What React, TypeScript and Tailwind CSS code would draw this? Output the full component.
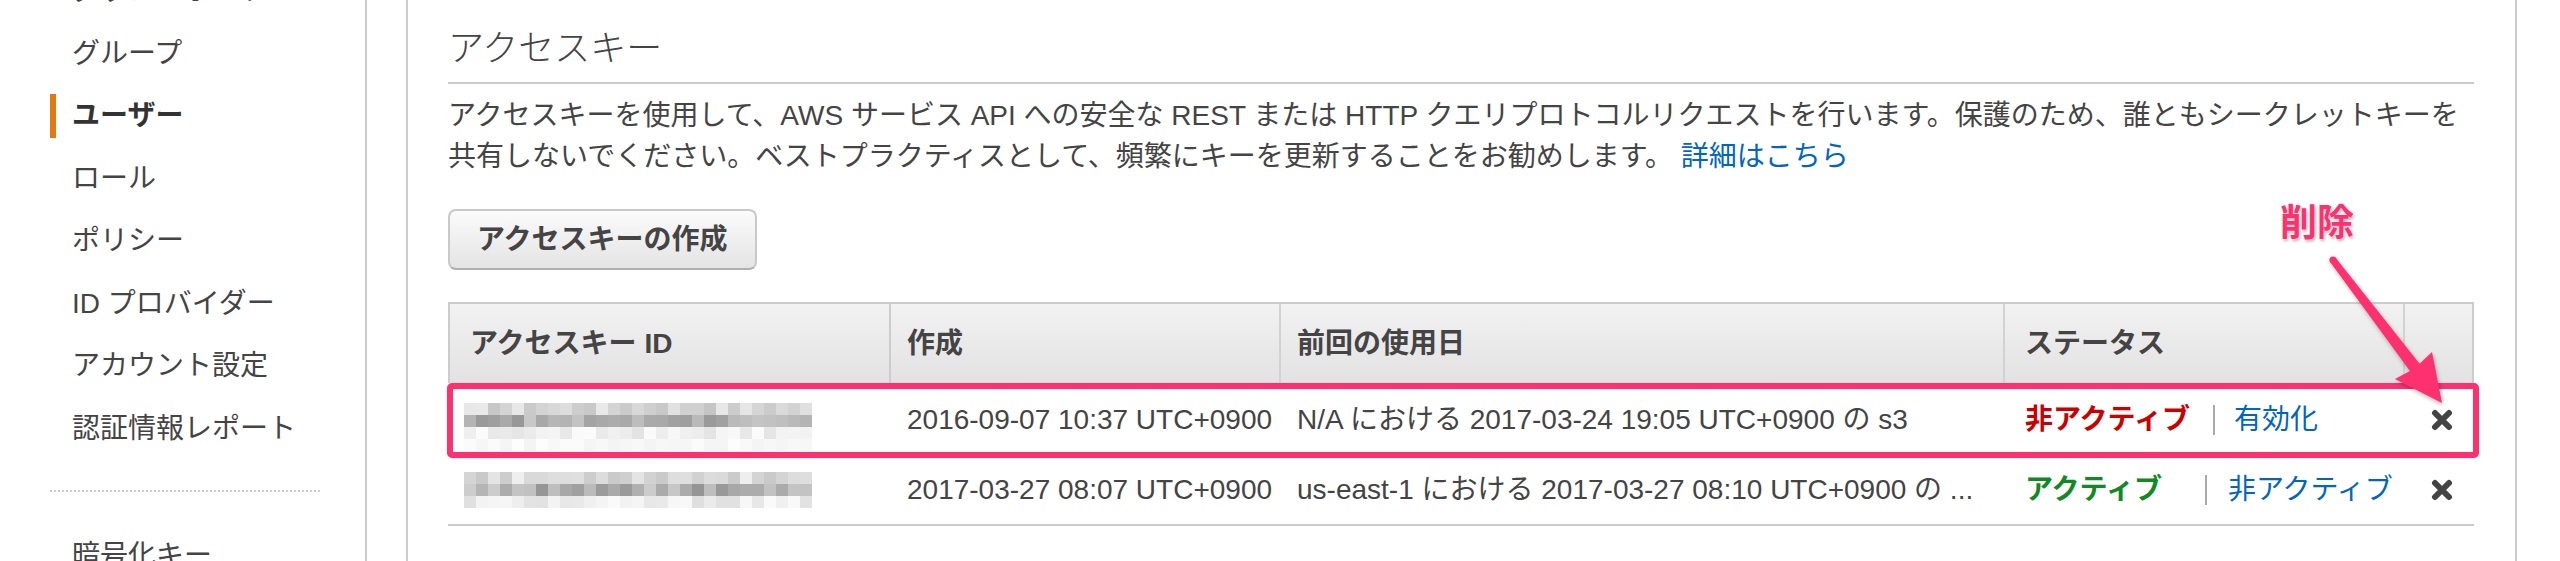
import type React from "react"

const navItems = [
  { label: "ダッシュボード" },
  { label: "グループ" },
  { label: "ユーザー", active: true },
  { label: "ロール" },
  { label: "ポリシー" },
  { label: "ID プロバイダー" },
  { label: "アカウント設定" },
  { label: "認証情報レポート" },
]

// pixelated (blurred) key id, one band of grey shades per mosaic row
const Mosaic: React.FC<{ seed: number; bands: [number, number][] }> = ({ seed, bands }) => {
  let s = seed
  const rand = () => {
    s = (s * 9301 + 49297) % 233280
    return s / 233280
  }
  const cols = 29
  const size = 12
  return (
    <svg width={cols * size} height={bands.length * size} className="block">
      {bands.map(([lo, hi], r) =>
        Array.from({ length: cols }).map((_, c) => {
          const v = Math.round(lo + (hi - lo) * rand())
          return <rect key={`${r}-${c}`} x={c * size} y={r * size} width={size} height={size} fill={`rgb(${v},${v},${v})`} />
        })
      )}
    </svg>
  )
}

const DeleteIcon = () => (
  <svg width="22" height="22" viewBox="0 0 22 22" className="block">
    <path d="M4 4 L18 18 M18 4 L4 18" stroke="#444" strokeWidth="6" strokeLinecap="round" />
  </svg>
)

const Separator = ({ className = "" }: { className?: string }) => (
  <span className={`inline-block h-[30px] w-[2px] bg-[#aaa] ${className}`} />
)

export default function App() {
  return (
    <div className="flex h-[561px] w-[2560px] overflow-hidden bg-white font-['Liberation_Sans','Noto_Sans_CJK_JP',sans-serif] text-[#444]">
      {/* sidebar */}
      <aside className="h-full w-[367px] shrink-0 border-r-2 border-[#ccc]">
        <ul className="-mt-[40px]">
          {navItems.map((item) => (
            <li key={item.label} className="flex h-[62.5px] items-center pl-[50px]">
              <span className={`h-[44px] w-[6px] ${item.active ? "bg-[#e47911]" : ""}`} />
              <span className={`ml-[16px] text-[28px] leading-none ${item.active ? "font-bold text-[#333]" : ""}`}>
                {item.label}
              </span>
            </li>
          ))}
        </ul>
        <div className="ml-[50px] mt-[30px] w-[270px] border-t-2 border-dotted border-[#ccc]" />
        <div className="mt-[33px] flex h-[62px] items-center pl-[72px] text-[28px] leading-none">暗号化キー</div>
      </aside>

      {/* content panel */}
      <main className="relative ml-[39px] h-full w-[2111px] shrink-0 border-x-2 border-[#ccc] pl-[40px] pr-[41px]">
        <h2 className="border-b-2 border-[#ccc] pb-[13px] pt-[29px] text-[36px] font-light leading-[40px]">アクセスキー</h2>
        <p className="mt-[11px] whitespace-nowrap text-[28px] leading-[41px]">
          <span className="block">
            アクセスキーを使用して、AWS サービス API への安全な REST または HTTP クエリプロトコルリクエストを行います。保護のため、誰ともシークレットキーを
          </span>
          <span className="block">
            共有しないでください。ベストプラクティスとして、頻繁にキーを更新することをお勧めします。 <span className="text-[#0066c0]">詳細はこちら</span>
          </span>
        </p>

        <button className="mt-[32px] h-[61px] rounded-[8px] border-2 border-[#c9c9c9] border-b-[#b0b0b0] bg-linear-to-b from-[#fbfbfb] to-[#e4e4e4] px-[27px] text-[28px] font-bold leading-none text-[#444]">
          アクセスキーの作成
        </button>

        {/* access key table */}
        <div className="mt-[32px] w-[2026px] text-[28px]">
          <div className="grid h-[81px] grid-cols-[443px_390px_724px_400px_69px] border-t-2 border-[#ccc] bg-linear-to-b from-[#f2f2f2] to-[#e2e2e2] font-bold">
            <div className="flex items-center border-x-2 border-[#ccc] pl-[20px]">アクセスキー ID</div>
            <div className="flex items-center border-r-2 border-[#d2d2d2] pl-[16px]">作成</div>
            <div className="flex items-center border-r-2 border-[#d2d2d2] pl-[16px]">前回の使用日</div>
            <div className="flex items-center border-r-2 border-[#d2d2d2] pl-[20px]">ステータス</div>
            <div className="border-r-2 border-[#ccc]" />
          </div>

          <div className="relative grid h-[73px] grid-cols-[443px_390px_724px_400px_69px] items-center">
            <div className="pl-[16px]">
              <div className="mt-[15px]">
                <Mosaic seed={17} bands={[[196, 236], [150, 200], [226, 252], [244, 253]]} />
              </div>
            </div>
            <div className="whitespace-nowrap pl-[16px]">2016-09-07 10:37 UTC+0900</div>
            <div className="truncate pl-[16px] pr-[20px]">N/A における 2017-03-24 19:05 UTC+0900 の s3</div>
            <div className="flex items-center pl-[20px]">
              <span className="font-bold text-[#cc0000]">非アクティブ</span>
              <Separator className="ml-[23px]" />
              <span className="ml-[19px] text-[#0066c0]">有効化</span>
            </div>
            <div className="pl-[26px]">
              <DeleteIcon />
            </div>
            <div className="pointer-events-none absolute -bottom-[2px] -left-[1px] -right-[5px] top-0 rounded-[5px] border-[6px] border-[#ff3070]" />
          </div>

          <div className="grid h-[70px] grid-cols-[443px_390px_724px_400px_69px] items-center border-b-2 border-[#ccc]">
            <div className="pl-[16px]">
              <Mosaic seed={53} bands={[[200, 240], [148, 205], [222, 250]]} />
            </div>
            <div className="whitespace-nowrap pl-[16px]">2017-03-27 08:07 UTC+0900</div>
            <div className="truncate pl-[16px] pr-[20px]">us-east-1 における 2017-03-27 08:10 UTC+0900 の ...</div>
            <div className="flex items-center pl-[20px]">
              <span className="font-bold text-[#0f8a25]">アクティブ</span>
              <Separator className="ml-[43px]" />
              <span className="ml-[21px] text-[#0066c0]">非アクティブ</span>
            </div>
            <div className="pl-[26px]">
              <DeleteIcon />
            </div>
          </div>
        </div>

        {/* annotation: label + arrow */}
        <div className="absolute left-[1872px] top-[202px] text-[37px] font-bold leading-[44px] text-[#ff3070] [text-shadow:0_0_2px_#fff,1px_2px_3px_rgba(0,0,0,0.3)]">
          削除
        </div>
        <svg
          width="140"
          height="165"
          viewBox="0 0 140 165"
          className="pointer-events-none absolute left-[1912px] top-[250px] [filter:drop-shadow(1px_2px_2px_rgba(0,0,0,0.3))]"
        >
          <circle cx="13" cy="10" r="3.6" fill="#ff3070" />
          <path d="M15.8 7.9 L99.6 113.7 L112 102 L122 153 L75 129 L90 120.9 L10.2 12.1 Z" fill="#ff3070" />
        </svg>
      </main>
    </div>
  )
}
